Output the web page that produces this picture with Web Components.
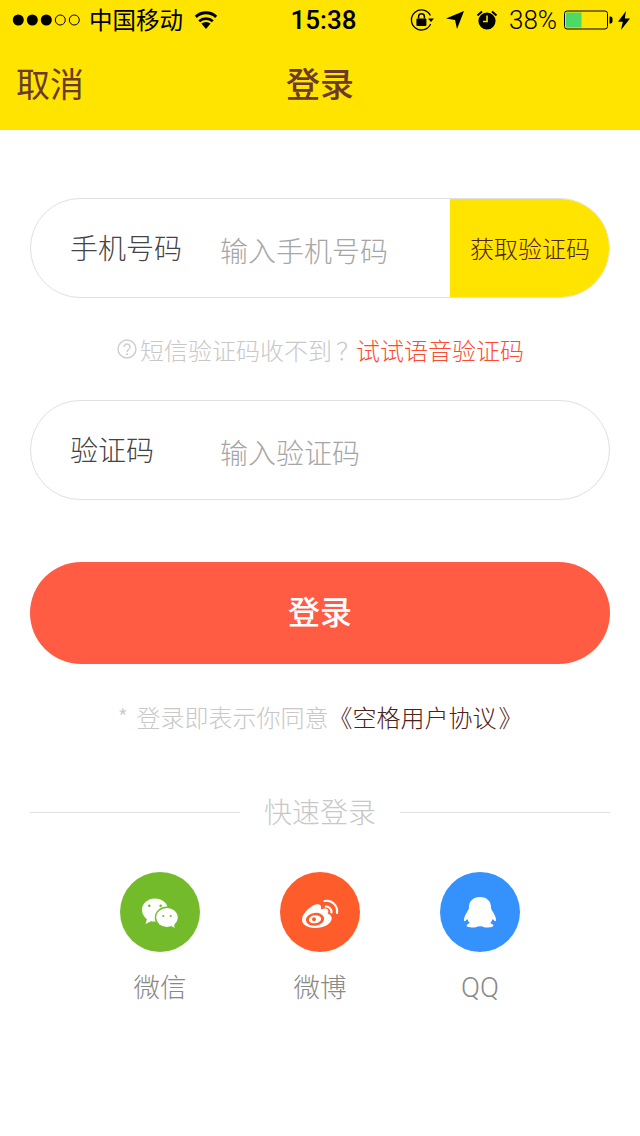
<!DOCTYPE html>
<html lang="zh-CN">
<head>
<meta charset="utf-8">
<title>登录</title>
<style>
  html, body { margin: 0; padding: 0; background: #fff; }
  body { width: 640px; height: 1136px; overflow: hidden; font-family: "Noto Sans CJK SC", "Liberation Sans", sans-serif; }
</style>
</head>
<body>
<login-page></login-page>

<script>
class StatusBar extends HTMLElement {
  constructor() {
    super();
    this.attachShadow({ mode: 'open' });
    this.shadowRoot.innerHTML = `
      <style>
        :host { display: grid; grid-template-columns: 1fr auto 1fr; align-items: center; height: 40px; color: #000; }
        .side { display: flex; align-items: center; height: 40px; }
        .right { justify-content: flex-end; padding-right: 10px; }
        svg { display: block; flex: none; }
        .carrier { font: 400 23.5px "Noto Sans CJK SC", sans-serif; margin: 0 0 2px 8px; width: 94px; white-space: nowrap; line-height: 38px; }
        .time { margin-left: 7px; font: 500 26px/40px Roboto, sans-serif; }
        .percent { font: 300 26px/40px Roboto, sans-serif; margin-left: 11px; width: 47px; }
      </style>
      <div class="side">
        <svg width="81" height="40" viewBox="0 0 81 40">
          <circle cx="18.3" cy="20" r="5.5"/><circle cx="32.3" cy="20" r="5.5"/><circle cx="46.3" cy="20" r="5.5"/>
          <circle cx="60.3" cy="20" r="5" fill="none" stroke="#000"/><circle cx="74.3" cy="20" r="5" fill="none" stroke="#000"/>
        </svg>
        <span class="carrier">中国移动</span>
        <svg width="24" height="18" viewBox="0 0 24 18" style="margin-left:11px">
          <path d="M12 18l-4.600-5.400a7 7 0 0 1 9.200 0z"/>
          <path d="M5.200 10.200a10 10 0 0 1 13.600 0" fill="none" stroke="#000" stroke-width="2.800"/>
          <path d="M1.800 5.800a15.200 15.200 0 0 1 20.400 0" fill="none" stroke="#000" stroke-width="3"/>
        </svg>
      </div>
      <span class="time">15:38</span>
      <div class="side right">
        <svg width="26" height="22" viewBox="0 0 26 22">
          <path d="M20.400 6.500A10 10 0 1 0 20.600 15" fill="none" stroke="#000" stroke-width="1.300"/>
          <path d="M18 9.500h6l-3 3.400z"/>
          <rect x="6.400" y="9.500" width="10" height="7.500" rx="1"/>
          <path d="M8.600 9.500V7.600a2.900 2.900 0 0 1 5.800 0v1.900" fill="none" stroke="#000" stroke-width="1.500"/>
        </svg>
        <svg width="18" height="18" viewBox="0 0 18 18" style="margin-left:10px">
          <path d="M18 0L11 18l-2-9-9-1.600z"/>
        </svg>
        <svg width="22" height="20" viewBox="0 0 22 20" style="margin-left:12px">
          <circle cx="11" cy="11" r="8.600"/>
          <path d="M11 5.500V11.500H7" fill="none" stroke="#ffe400" stroke-width="1.600"/>
          <path d="M1.500 5.500L6 1.500M20.500 5.500L16 1.500" stroke="#000" stroke-width="2"/>
        </svg>
        <span class="percent">38%</span>
        <svg width="49" height="20" viewBox="0 0 49 20" style="margin-left:8px">
          <rect x="0.500" y="1" width="43" height="18" rx="2.500" fill="none" stroke="#000"/>
          <rect x="2" y="2.500" width="15.500" height="15" fill="#4cd964"/>
          <path d="M45.500 6.500h1a2 2 0 0 1 2 2v3a2 2 0 0 1-2 2h-1z"/>
        </svg>
        <svg width="12" height="19" viewBox="0 0 12 19" style="margin-left:5px">
          <path d="M8 0L0 10.800h4.800L3 19l9-11.500H6.800z"/>
        </svg>
      </div>
    `;
  }
}

class NavBar extends HTMLElement {
  constructor() {
    super();
    this.attachShadow({ mode: 'open' });
    this.shadowRoot.innerHTML = `
      <style>
        :host { display: grid; grid-template-columns: 1fr auto 1fr; align-items: start; height: 90px; padding: 0 16px; color: #6b3a2a; font-size: 34px; line-height: 85px; }
        .title { font-weight: 500; }
      </style>
      <span><slot name="left"></slot></span>
      <span class="title"><slot></slot></span>
      <span></span>
    `;
  }
}

class AppHeader extends HTMLElement {
  constructor() {
    super();
    this.attachShadow({ mode: 'open' });
    this.shadowRoot.innerHTML = `
      <style>
        :host { display: block; background: #ffe400; height: 130px; }
      </style>
      <status-bar></status-bar>
      <nav-bar><span slot="left">取消</span>登录</nav-bar>
    `;
  }
}

class InputRow extends HTMLElement {
  constructor() {
    super();
    this.attachShadow({ mode: 'open' });
    this.shadowRoot.innerHTML = `
      <style>
        :host { display: flex; height: 100px; box-sizing: border-box; border: 1px solid #e0e0e0; border-radius: 50px; overflow: hidden; align-items: stretch; background: #fff; }
        .label { width: 150px; margin-left: 39px; flex: none; color: #444; font-size: 28px; font-weight: 300; line-height: 97px; height: 98px; white-space: nowrap; }
        .placeholder { flex: 1; color: #a6a6a6; font-size: 28px; font-weight: 300; line-height: 103px; height: 98px; white-space: nowrap; }
        ::slotted([slot="action"]) { flex: none; }
      </style>
      <span class="label"><slot name="label"></slot></span>
      <span class="placeholder"><slot></slot></span>
      <slot name="action"></slot>
    `;
  }
}

class CodeButton extends HTMLElement {
  constructor() {
    super();
    this.attachShadow({ mode: 'open' });
    this.shadowRoot.innerHTML = `
      <style>
        :host { display: flex; align-items: center; justify-content: center; width: 160px; margin-right: -1px; padding-bottom: 1px; background: #ffe400; color: #4f2315; font-size: 24px; font-weight: 300; white-space: nowrap; }
      </style>
      <slot></slot>
    `;
  }
}

class HintLine extends HTMLElement {
  constructor() {
    super();
    this.attachShadow({ mode: 'open' });
    this.shadowRoot.innerHTML = `
      <style>
        :host { display: flex; align-items: center; justify-content: center; height: 102px; padding-left: 1px; color: #c8c8c8; font-size: 24px; font-weight: 300; white-space: nowrap; }
        svg { display: block; margin-right: 3px; }
        ::slotted(em) { font-style: normal; color: #ff4a30; font-weight: 300; }
        ::slotted(b) { display: inline-block; padding-left: 4px; letter-spacing: -4px; font-weight: 300; }
      </style>
      <svg width="20" height="20" viewBox="0 0 20 20">
        <circle cx="10" cy="10" r="9" fill="none" stroke="#ccc" stroke-width="1.400"/>
        <path d="M7 8a3 3 0 1 1 4.600 2.500c-1.100.700-1.600 1.200-1.600 2.500" fill="none" stroke="#ccc" stroke-width="1.400"/>
        <circle cx="10" cy="15.200" r="1" fill="#ccc"/>
      </svg>
      <slot></slot>
    `;
  }
}

class LoginButton extends HTMLElement {
  constructor() {
    super();
    this.attachShadow({ mode: 'open' });
    this.shadowRoot.innerHTML = `
      <style>
        :host { display: flex; align-items: center; justify-content: center; height: 96px; padding-bottom: 6px; margin-top: 62px; border-radius: 51px; background: #ff5c43; color: #fff; font-size: 32px; font-weight: 500; }
      </style>
      <slot></slot>
    `;
  }
}

class AgreementLine extends HTMLElement {
  constructor() {
    super();
    this.attachShadow({ mode: 'open' });
    this.shadowRoot.innerHTML = `
      <style>
        :host { display: block; text-align: center; margin-top: 36px; height: 34px; line-height: 34px; color: #c8c8c8; font-size: 24px; font-weight: 300; white-space: nowrap; word-spacing: 3px; }
        ::slotted(em) { font-style: normal; color: #4f2015; font-weight: 300; }
      </style>
      <slot></slot>
    `;
  }
}

class OrDivider extends HTMLElement {
  constructor() {
    super();
    this.attachShadow({ mode: 'open' });
    this.shadowRoot.innerHTML = `
      <style>
        :host { display: flex; align-items: center; height: 40px; margin-top: 58px; color: #c8c8c8; font-size: 28px; font-weight: 300; }
        i { flex: 1; height: 1px; background: #e0e0e0; }
        span { width: 160px; text-align: center; line-height: 38px; padding-bottom: 2px; }
      </style>
      <i></i><span><slot></slot></span><i></i>
    `;
  }
}

class SocialItem extends HTMLElement {
  constructor() {
    super();
    this.attachShadow({ mode: 'open' });
    this.shadowRoot.innerHTML = `
      <style>
        :host { display: flex; flex-direction: column; align-items: center; width: 160px; color: #888; font-size: 26.500px; font-weight: 300; }
        .dot { width: 80px; height: 80px; border-radius: 50%; background: var(--tint); }
        .name { margin-top: 14px; line-height: 40px; }
        ::slotted(svg) { display: block; }
      </style>
      <div class="dot"><slot name="icon"></slot></div>
      <div class="name"><slot></slot></div>
    `;
  }
}

class LoginPage extends HTMLElement {
  constructor() {
    super();
    this.attachShadow({ mode: 'open' });
    this.shadowRoot.innerHTML = `
      <style>
        :host { display: block; }
        main { display: flex; flex-direction: column; padding: 68px 30px 0; }
        .socials { display: flex; justify-content: center; margin-top: 40px; }
      </style>
      <app-header></app-header>
      <main>
        <input-row>
          <span slot="label">手机号码</span>
          输入手机号码
          <code-button slot="action">获取验证码</code-button>
        </input-row>
        <hint-line>短信验证码收不到<b>？</b><em>试试语音验证码</em></hint-line>
        <input-row>
          <span slot="label">验证码</span>
          输入验证码
        </input-row>
        <login-button>登录</login-button>
        <agreement-line>* 登录即表示你同意<em>《空格用户协议<span style="margin-left:2px">》</span></em></agreement-line>
        <or-divider>快速登录</or-divider>
        <div class="socials">
          <social-item style="--tint:#74bb2c">
            <svg slot="icon" width="80" height="80" viewBox="0 0 80 80">
              <ellipse cx="35" cy="38" rx="13" ry="11.500" fill="#fff"/>
              <path d="M27 47l-1.500 5 6-3z" fill="#fff"/>
              <ellipse cx="47" cy="45.500" rx="12.200" ry="11" fill="#74bb2c"/>
              <ellipse cx="47" cy="45.500" rx="10.800" ry="9.500" fill="#fff"/>
              <path d="M50 53l4.500 3-.5-5z" fill="#fff"/>
              <circle cx="29.300" cy="33.700" r="1.300" fill="#74bb2c"/><circle cx="40.700" cy="33.700" r="1.300" fill="#74bb2c"/>
              <circle cx="43.300" cy="44" r="1.100" fill="#74bb2c"/><circle cx="50.700" cy="44" r="1.100" fill="#74bb2c"/>
            </svg>
            微信
          </social-item>
          <social-item style="--tint:#ff5c2b">
            <svg slot="icon" width="80" height="80" viewBox="0 0 80 80">
              <path d="M22 48C22 43 27 37 33 33.500C37 31.500 40.500 32 41 34.500C41.200 35.800 40.800 37 40.800 37.500C43.500 36.300 47 36 48 38C48.600 39.200 48.300 40.500 47.800 41.800C50.500 42.500 52 44.500 51.700 47C51 52 43.500 56 35.500 56C28 56 22 52.800 22 48z" fill="#fff"/>
              <ellipse cx="35" cy="47.300" rx="9.200" ry="6.400" fill="#ff5c2b" transform="rotate(-8 35 47.300)"/>
              <ellipse cx="35" cy="47.300" rx="6.200" ry="4" fill="#fff" transform="rotate(-8 35 47.300)"/>
              <circle cx="34" cy="47.300" r="2" fill="#ff5c2b"/>
              <path d="M44.500 29A10.500 10.500 0 0 1 57 41" fill="none" stroke="#fff" stroke-width="2.200" stroke-linecap="round"/>
              <path d="M45.800 34.500A5.500 5.500 0 0 1 51.500 40.500" fill="none" stroke="#fff" stroke-width="2.200" stroke-linecap="round"/>
            </svg>
            微博
          </social-item>
          <social-item style="--tint:#3592fd">
            <svg slot="icon" width="80" height="80" viewBox="0 0 80 80">
              <path transform="translate(40 41.300) scale(1.100 1) translate(-40 -40.300)" d="M40 24c6.500 0 10 4.500 10 10 0 1.600.600 3 1.500 4.500 1.800 3 3 6 3.100 8.300 0 1.400-.600 1.700-1.500.900l-1.600-1.600c-.500 1.700-1.200 3-2.200 4.100 1.900.700 2.900 1.500 2.900 2.400 0 1.300-2.500 2-5.200 2-2.200 0-4.500-.500-5.600-1.300-.900.100-1.900.100-2.800 0-1.100.800-3.400 1.300-5.600 1.300-2.700 0-5.200-.700-5.200-2 0-.900 1-1.700 2.900-2.400-1-1.100-1.700-2.400-2.200-4.100l-1.600 1.600c-.900.800-1.500.500-1.500-.900.100-2.300 1.300-5.300 3.100-8.300.900-1.500 1.500-2.900 1.500-4.500 0-5.500 3.500-10 10-10z" fill="#fff"/>
            </svg>
            <span style="font-family:Roboto,'Liberation Sans',sans-serif;font-size:28px">QQ</span>
          </social-item>
        </div>
      </main>
    `;
  }
}

customElements.define('status-bar', StatusBar);
customElements.define('nav-bar', NavBar);
customElements.define('app-header', AppHeader);
customElements.define('input-row', InputRow);
customElements.define('code-button', CodeButton);
customElements.define('hint-line', HintLine);
customElements.define('login-button', LoginButton);
customElements.define('agreement-line', AgreementLine);
customElements.define('or-divider', OrDivider);
customElements.define('social-item', SocialItem);
customElements.define('login-page', LoginPage);
</script>
</body>
</html>
